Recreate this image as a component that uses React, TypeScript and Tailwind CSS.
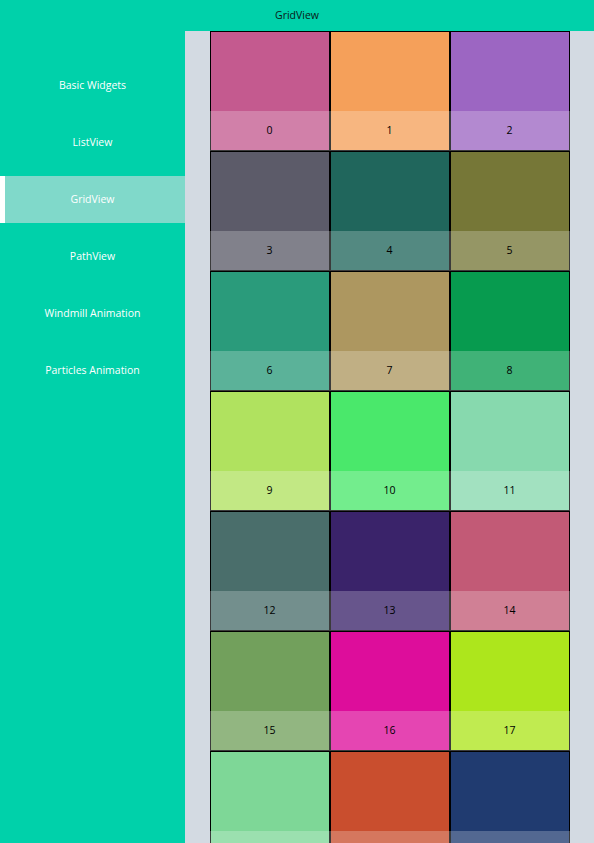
import { useState } from "react";

const colors = [
  "#c45a8f", "#f5a05a", "#9c66c2",
  "#5c5b69", "#20665c", "#767737",
  "#2a9b7b", "#ad9760", "#079b4f",
  "#b0e25f", "#4ae86b", "#87d9ae",
  "#4a6e6b", "#3a236a", "#c25a76",
  "#72a05c", "#dd0d9b", "#ade61c",
  "#7ed797", "#c94e2e", "#203b70",
];

const pages = [
  "Basic Widgets",
  "ListView",
  "GridView",
  "PathView",
  "Windmill Animation",
  "Particles Animation",
];

export default function App() {
  const [current, setCurrent] = useState(2);

  return (
    <div
      className="flex h-screen flex-col overflow-hidden bg-[#00d1aa] text-[10.5px]"
      style={{ fontFamily: '"Open Sans", "Noto Sans", sans-serif' }}
    >
      <div className="flex h-[31px] shrink-0 items-center justify-center text-[#0b1a16]">
        {pages[current]}
      </div>
      <div className="flex min-h-0 flex-1">
        <div className="flex w-[185px] shrink-0 flex-col gap-[10px] pt-[31px]">
          {pages.map((p, i) => (
            <button
              key={p}
              onClick={() => setCurrent(i)}
              className={`flex h-[47px] items-center justify-center pt-px text-white ${
                i === current ? "bg-[#80d9ca] shadow-[inset_5px_0_0_white]" : ""
              }`}
            >
              {p}
            </button>
          ))}
        </div>
        <div className="flex flex-1 justify-center overflow-hidden bg-[#d3dae2]">
          <div className="grid h-fit grid-cols-[repeat(3,120px)]">
            {colors.map((c, i) => (
              <div
                key={i}
                className="relative h-[120px] w-[120px] border border-black"
                style={{ backgroundColor: c }}
              >
                <div className="absolute -bottom-px -left-px -right-px flex h-[40px] items-center justify-center bg-white/[0.23] text-black">
                  {i}
                </div>
              </div>
            ))}
          </div>
        </div>
      </div>
    </div>
  );
}
